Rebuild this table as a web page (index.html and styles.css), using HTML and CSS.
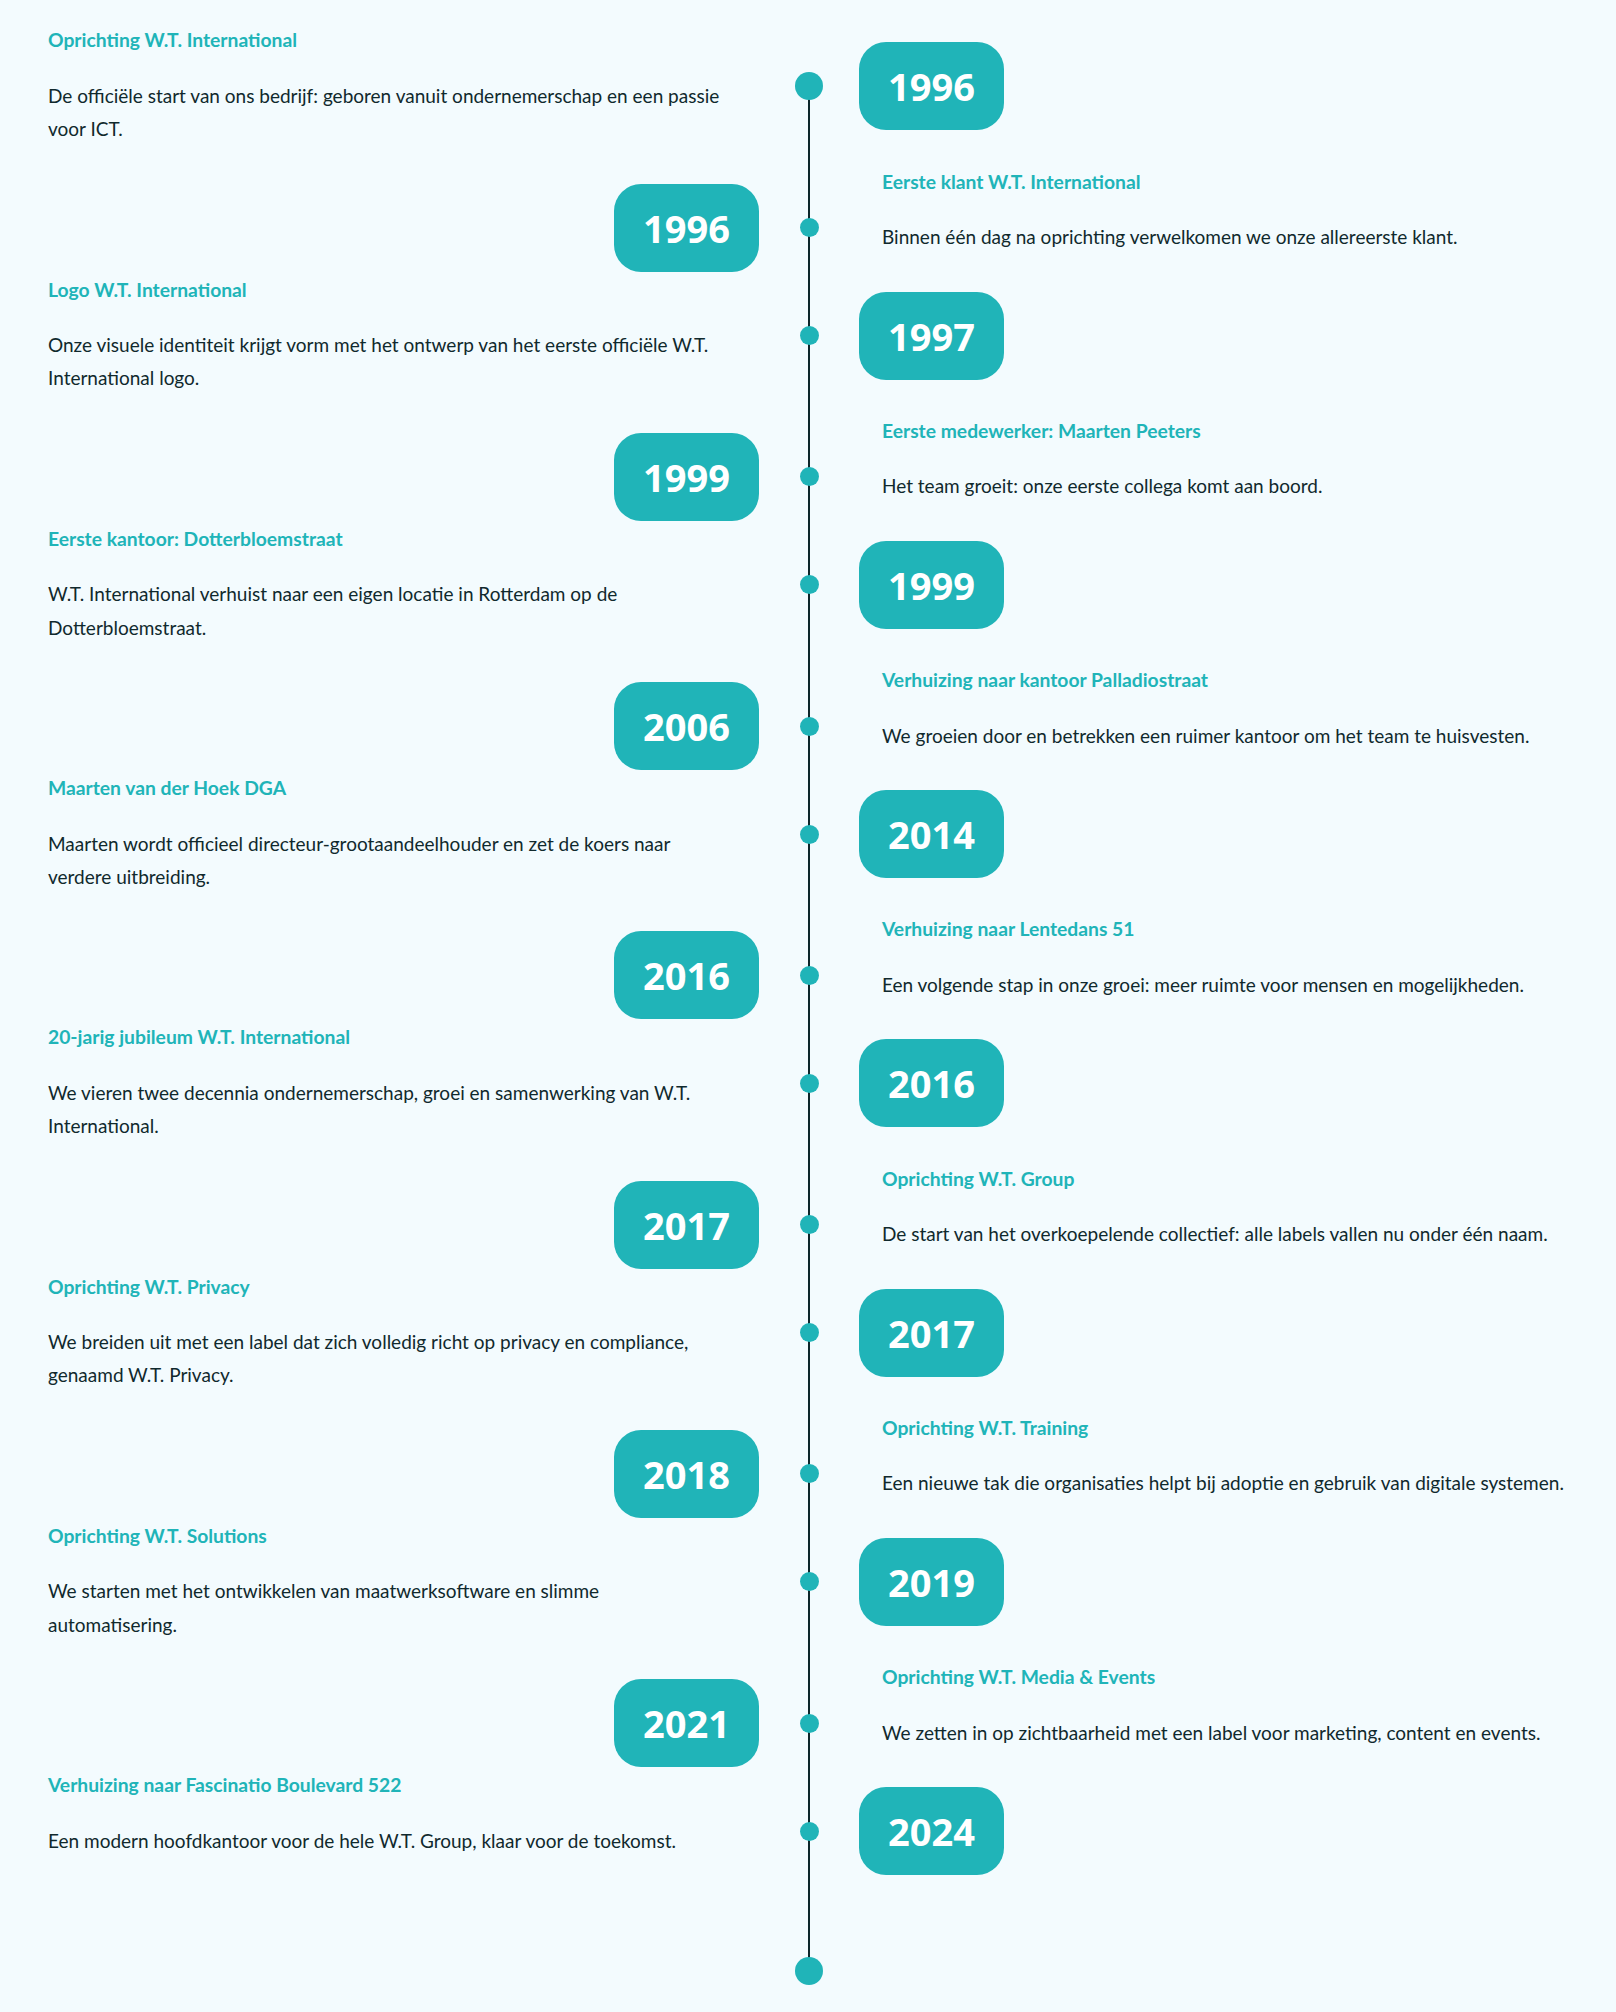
FILE: index.html
```html
<!DOCTYPE html>
<html lang="nl">
<head>
<meta charset="utf-8">
<title>Tijdlijn W.T. Group</title>
<link rel="stylesheet" href="styles.css">
</head>
<body>
<main class="timeline">
  <div class="item item--first">
    <div class="side side--left"><div class="entry"><h3 class="entry-title">Oprichting W.T. International</h3><p class="entry-text">De officiële start van ons bedrijf: geboren vanuit ondernemerschap en een passie voor ICT.</p></div></div>
    <div class="axis"><span class="dot dot--big"></span></div>
    <div class="side side--right"><div class="badge">1996</div></div>
  </div>
  <div class="item">
    <div class="side side--left"><div class="badge">1996</div></div>
    <div class="axis"><span class="dot"></span></div>
    <div class="side side--right"><div class="entry"><h3 class="entry-title">Eerste klant W.T. International</h3><p class="entry-text">Binnen één dag na oprichting verwelkomen we onze allereerste klant.</p></div></div>
  </div>
  <div class="item">
    <div class="side side--left"><div class="entry"><h3 class="entry-title">Logo W.T. International</h3><p class="entry-text">Onze visuele identiteit krijgt vorm met het ontwerp van het eerste officiële W.T. International logo.</p></div></div>
    <div class="axis"><span class="dot"></span></div>
    <div class="side side--right"><div class="badge">1997</div></div>
  </div>
  <div class="item">
    <div class="side side--left"><div class="badge">1999</div></div>
    <div class="axis"><span class="dot"></span></div>
    <div class="side side--right"><div class="entry"><h3 class="entry-title">Eerste medewerker: Maarten Peeters</h3><p class="entry-text">Het team groeit: onze eerste collega komt aan boord.</p></div></div>
  </div>
  <div class="item">
    <div class="side side--left"><div class="entry"><h3 class="entry-title">Eerste kantoor: Dotterbloemstraat</h3><p class="entry-text">W.T. International verhuist naar een eigen locatie in Rotterdam op de Dotterbloemstraat.</p></div></div>
    <div class="axis"><span class="dot"></span></div>
    <div class="side side--right"><div class="badge">1999</div></div>
  </div>
  <div class="item">
    <div class="side side--left"><div class="badge">2006</div></div>
    <div class="axis"><span class="dot"></span></div>
    <div class="side side--right"><div class="entry"><h3 class="entry-title">Verhuizing naar kantoor Palladiostraat</h3><p class="entry-text">We groeien door en betrekken een ruimer kantoor om het team te huisvesten.</p></div></div>
  </div>
  <div class="item">
    <div class="side side--left"><div class="entry"><h3 class="entry-title">Maarten van der Hoek DGA</h3><p class="entry-text">Maarten wordt officieel directeur-grootaandeelhouder en zet de koers naar verdere uitbreiding.</p></div></div>
    <div class="axis"><span class="dot"></span></div>
    <div class="side side--right"><div class="badge">2014</div></div>
  </div>
  <div class="item">
    <div class="side side--left"><div class="badge">2016</div></div>
    <div class="axis"><span class="dot"></span></div>
    <div class="side side--right"><div class="entry"><h3 class="entry-title">Verhuizing naar Lentedans 51</h3><p class="entry-text">Een volgende stap in onze groei: meer ruimte voor mensen en mogelijkheden.</p></div></div>
  </div>
  <div class="item">
    <div class="side side--left"><div class="entry"><h3 class="entry-title">20-jarig jubileum W.T. International</h3><p class="entry-text">We vieren twee decennia ondernemerschap, groei en samenwerking van W.T. International.</p></div></div>
    <div class="axis"><span class="dot"></span></div>
    <div class="side side--right"><div class="badge">2016</div></div>
  </div>
  <div class="item">
    <div class="side side--left"><div class="badge">2017</div></div>
    <div class="axis"><span class="dot"></span></div>
    <div class="side side--right"><div class="entry"><h3 class="entry-title">Oprichting W.T. Group</h3><p class="entry-text">De start van het overkoepelende collectief: alle labels vallen nu onder één naam.</p></div></div>
  </div>
  <div class="item">
    <div class="side side--left"><div class="entry"><h3 class="entry-title">Oprichting W.T. Privacy</h3><p class="entry-text">We breiden uit met een label dat zich volledig richt op privacy en compliance, genaamd W.T. Privacy.</p></div></div>
    <div class="axis"><span class="dot"></span></div>
    <div class="side side--right"><div class="badge">2017</div></div>
  </div>
  <div class="item">
    <div class="side side--left"><div class="badge">2018</div></div>
    <div class="axis"><span class="dot"></span></div>
    <div class="side side--right"><div class="entry"><h3 class="entry-title">Oprichting W.T. Training</h3><p class="entry-text">Een nieuwe tak die organisaties helpt bij adoptie en gebruik van digitale systemen.</p></div></div>
  </div>
  <div class="item">
    <div class="side side--left"><div class="entry"><h3 class="entry-title">Oprichting W.T. Solutions</h3><p class="entry-text">We starten met het ontwikkelen van maatwerksoftware en slimme automatisering.</p></div></div>
    <div class="axis"><span class="dot"></span></div>
    <div class="side side--right"><div class="badge">2019</div></div>
  </div>
  <div class="item">
    <div class="side side--left"><div class="badge">2021</div></div>
    <div class="axis"><span class="dot"></span></div>
    <div class="side side--right"><div class="entry"><h3 class="entry-title">Oprichting W.T. Media &amp; Events</h3><p class="entry-text">We zetten in op zichtbaarheid met een label voor marketing, content en events.</p></div></div>
  </div>
  <div class="item">
    <div class="side side--left"><div class="entry"><h3 class="entry-title">Verhuizing naar Fascinatio Boulevard 522</h3><p class="entry-text">Een modern hoofdkantoor voor de hele W.T. Group, klaar voor de toekomst.</p></div></div>
    <div class="axis"><span class="dot"></span></div>
    <div class="side side--right"><div class="badge">2024</div></div>
  </div>
  <div class="item item--end">
    <div class="side side--left"></div>
    <div class="axis"><span class="dot dot--big"></span></div>
    <div class="side side--right"></div>
  </div>
</main>
</body>
</html>
```

FILE: styles.css
```css
* { box-sizing: border-box; }

html, body {
  margin: 0;
  padding: 0;
  background: #f3fbfe;
}

body {
  font-family: Lato, "Liberation Sans", sans-serif;
  color: #10292d;
}

.timeline {
  padding: 29.3px 47px 26px 48px;
}

.item {
  display: grid;
  grid-template-columns: 711px 100px 1fr;
  align-items: start;
}

.side--left {
  display: flex;
  justify-content: flex-end;
  padding-right: 29px;
}

.side--left .entry {
  width: 100%;
}

.side--left .badge {
  margin-right: -29px;
}

.side--right {
  display: flex;
  justify-content: flex-start;
  padding-left: 23px;
}

.side--right .badge {
  margin-left: -23px;
}

.entry {
  padding-bottom: 25.13px;
}

.entry-title {
  margin: 0 0 27.57px;
  font-family: Lato, "Liberation Sans", sans-serif;
  font-weight: 700;
  font-size: 19.3px;
  line-height: 22px;
  color: #20b4b8;
}

.entry-text {
  margin: 0;
  font-size: 19px;
  line-height: 33.3px;
  color: #10292d;
}

.badge {
  margin-top: 12.97px;
  width: 145px;
  height: 88px;
  border-radius: 27px;
  background: #20b4b8;
  color: #ffffff;
  display: flex;
  align-items: center;
  justify-content: center;
  font-family: "Open Sans", "Noto Sans", sans-serif;
  font-weight: 700;
  font-size: 38px;
  line-height: 1;
}

.axis {
  align-self: stretch;
  display: flex;
  justify-content: center;
  align-items: flex-start;
  background: linear-gradient(#0c262a, #0c262a) no-repeat center top / 2px 100%;
}

.item--first .axis {
  background-position: center 57px;
}

.dot {
  display: block;
  width: 19px;
  height: 19px;
  border-radius: 50%;
  background: #20b4b8;
  margin-top: 47.47px;
}

.dot--big {
  width: 28px;
  height: 28px;
  margin-top: 42.97px;
}

.item--end .axis {
  background-size: 2px 88.6px;
}

.item--end .dot--big {
  margin-top: 74.6px;
}
```
